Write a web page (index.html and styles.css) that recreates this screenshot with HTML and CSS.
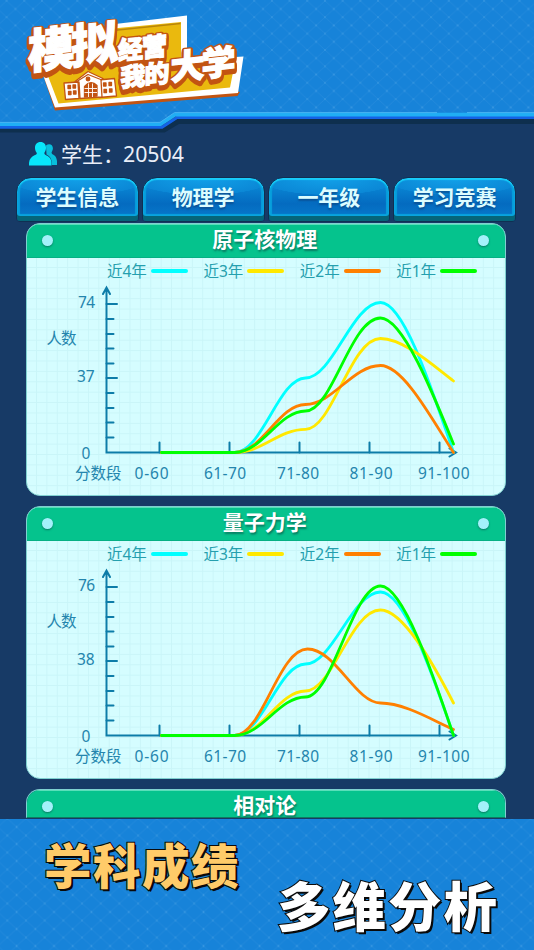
FILE: index.html
```html
<!DOCTYPE html>
<html lang="zh-CN">
<head>
<meta charset="utf-8">
<title>模拟经营我的大学</title>
<link rel="stylesheet" href="styles.css">
</head>
<body>
<div class="page">
  <header class="top">
    <div class="top-pattern"></div>
    <svg class="top-art" width="534" height="136" viewBox="0 0 534 136">
      <path d="M0 130H164L178 121.500H534" fill="none" stroke="#0e2f4e" stroke-width="5"/>
      <path d="M0 127.200H162L177 117.500H534" fill="none" stroke="#1463e6" stroke-width="3"/>
      <path d="M0 124.200H160.500L175 114.600H534" fill="none" stroke="#20aef4" stroke-width="3.800"/>
      <path d="M0 122.400H160L174.500 112.600H437M467 112.600H534" fill="none" stroke="#48b4f2" stroke-width="1"/>
      <path d="M44 78L55 110.500L237.500 96L240 92L190 80Z" fill="#c25412"/>
      <path d="M111 24.500L187 15.500V60L243.500 56.500L238 93L55 107.500L43 75Z" fill="#fff"/>
      <path d="M113 28.500L181 22V58L234 67L230 87.500L58.500 103.500L48 76Z" fill="#eab90e"/>
      <path d="M113 30.500L180.500 23.500" stroke="#b98509" stroke-width="1.500"/>
      <g class="logo-text logo-shadow">
        <text x="0" y="0" font-size="47" textLength="90" transform="translate(28 70.500) skewY(-6.500)">模拟</text>
        <text x="0" y="0" font-size="25" textLength="49" transform="translate(118 61) skewY(-6.500)">经营</text>
        <text x="0" y="0" font-size="25" textLength="49" transform="translate(120.500 88) skewY(-6.500)">我的</text>
        <text x="0" y="0" font-size="34" textLength="65" transform="translate(170.500 81.500) skewY(-6.500)">大学</text>
      </g>
      <g class="logo-text">
        <text x="0" y="0" font-size="47" textLength="90" transform="translate(28 69) skewY(-6.500)">模拟</text>
        <text x="0" y="0" font-size="25" textLength="49" transform="translate(118 60) skewY(-6.500)">经营</text>
        <text x="0" y="0" font-size="25" textLength="49" transform="translate(120.500 87) skewY(-6.500)">我的</text>
        <text x="0" y="0" font-size="34" textLength="65" transform="translate(170.500 80.500) skewY(-6.500)">大学</text>
      </g>
      <g stroke="#c25412" stroke-width="1.300" stroke-linejoin="round">
        <path d="M64 83L78 82L79 98.500L65.500 99.500Z M98 80L114.500 78.500L116.500 96L99 97.500Z" fill="#fff"/>
        <path d="M75 81.500L88 71.500L103 78.500L101 80L102 97L80 98.500L79 82Z" fill="#fff"/>
        <path d="M76 82L88 74.500L102 80" fill="none"/>
        <circle cx="88" cy="79" r="1.800" fill="#c25412"/>
        <path d="M84.500 97V86.500Q91 79.500 97 85.500V96Z" fill="#c25412"/>
        <path d="M88.500 83.500V97M92.500 83.500V97M84.500 88.500H97M84.500 92.500H97" stroke="#fff" stroke-width=".9"/>
        <path d="M68 85.500h2.500v3H68zM73 85h2.500v3H73zM68.500 91.500H71v3h-2.500zM73.500 91H76v3h-2.500zM103.500 83h2.500v3h-2.500zM109 82.500h2.500v3H109zM104 89.500h2.500v3H104zM109.500 89h2.500v3h-2.500z" fill="#c25412"/>
      </g>
    </svg>
  </header>

  <main class="screen">
    <div class="students">
      <svg class="people" width="28" height="24" viewBox="0 0 28 24" fill="#08e6fa">
        <path d="M17 3.500C21 0 26 4 23 9.500C22 11 23 12 24 12.500C27 14 28.500 17 28 23H23C23 17 21 14 17.500 12.500Z" fill="#08bfdc"/>
        <path d="M11.500 0C17 0 18.500 6 15.500 10.500C15 12 16 12.700 17.500 13.500C21 15 23 17.500 22.500 23.500H0C-.5 18 2 14.500 6 13C8 12.300 8 11.500 7.500 10.500C4.500 6 6 0 11.500 0Z"/>
      </svg>
      <span class="students-label">学生：</span><span class="students-count">20504</span>
    </div>

    <nav class="tabs">
      <span class="tab">学生信息</span>
      <span class="tab">物理学</span>
      <span class="tab">一年级</span>
      <span class="tab">学习竞赛</span>
    </nav>

    <section class="cards">
      <article class="card">
        <h2 class="card-title"><i class="pin"></i><span>原子核物理</span><i class="pin"></i></h2>
        <div class="card-body">
          <ul class="legend">
            <li>近4年<i class="key y4"></i></li><li>近3年<i class="key y3"></i></li><li>近2年<i class="key y2"></i></li><li>近1年<i class="key y1"></i></li>
          </ul>
          <svg class="chart" width="478" height="214" viewBox="26.500 282 478 214">
            <g class="axis">
              <path d="M106 288V452.500H455M102.500 294L106 287.500L109.500 294M449 448.500L455.500 452.500L449 456.500"/>
              <path d="M106 304h10.500M106 319h7M106 334h7M106 348.500h7M106 363.500h7M106 378h10.500M106 393h7M106 408h7M106 422.500h7M106 437.500h7M159 442.500v10M229 442.500v10M299 442.500v10M369 442.500v10M439 442.500v10"/>
            </g>
            <g class="labels">
              <text x="77.500" y="307.500" textLength="17">74</text>
              <text x="76.500" y="381.500" textLength="17.500">37</text>
              <text x="81" y="458.500" textLength="9">0</text>
              <text x="46" y="343.500" textLength="30">人数</text>
              <text x="74.500" y="478.800" textLength="46.500">分数段</text>
              <text x="134" y="478.800" textLength="34">0-60</text>
              <text x="203.500" y="478.800" textLength="42">61-70</text>
              <text x="276.500" y="478.800" textLength="42">71-80</text>
              <text x="349" y="478.800" textLength="43">81-90</text>
              <text x="417.500" y="478.800" textLength="51.500">91-100</text>
            </g>
            <g class="series">
              <path class="s4" d="M161 452.500H234C262 452.500 278 378 305 378C332 378 352 302.500 380 302.500C403 302.500 430 385 453 452.500"/>
              <path class="s3" d="M161 452.500H234C262 452.500 278 429.300 305 429.300C332 429.300 350 338.500 380 338.500C403 338.500 432 365 453 381"/>
              <path class="s2" d="M161 452.500H234C262 452.500 278 404.500 305 404.500C332 404.500 352 365.500 380 365.500C403 365.500 432 420 453 452.500"/>
              <path class="s1" d="M161 452.500H234C262 452.500 278 411 305 411C332 411 350 318 380 318C402 318 432 392 453 444"/>
            </g>
          </svg>
        </div>
      </article>

      <article class="card">
        <h2 class="card-title"><i class="pin"></i><span>量子力学</span><i class="pin"></i></h2>
        <div class="card-body">
          <ul class="legend">
            <li>近4年<i class="key y4"></i></li><li>近3年<i class="key y3"></i></li><li>近2年<i class="key y2"></i></li><li>近1年<i class="key y1"></i></li>
          </ul>
          <svg class="chart" width="478" height="214" viewBox="26.500 282 478 214">
            <g class="axis">
              <path d="M106 288V452.500H455M102.500 294L106 287.500L109.500 294M449 448.500L455.500 452.500L449 456.500"/>
              <path d="M106 304h10.500M106 319h7M106 334h7M106 348.500h7M106 363.500h7M106 378h10.500M106 393h7M106 408h7M106 422.500h7M106 437.500h7M159 442.500v10M229 442.500v10M299 442.500v10M369 442.500v10M439 442.500v10"/>
            </g>
            <g class="labels">
              <text x="77.500" y="307.500" textLength="17">76</text>
              <text x="76.500" y="381.500" textLength="17.500">38</text>
              <text x="81" y="458.500" textLength="9">0</text>
              <text x="46" y="343.500" textLength="30">人数</text>
              <text x="74.500" y="478.800" textLength="46.500">分数段</text>
              <text x="134" y="478.800" textLength="34">0-60</text>
              <text x="203.500" y="478.800" textLength="42">61-70</text>
              <text x="276.500" y="478.800" textLength="42">71-80</text>
              <text x="349" y="478.800" textLength="43">81-90</text>
              <text x="417.500" y="478.800" textLength="51.500">91-100</text>
            </g>
            <g class="series">
              <path class="s4" d="M161 452.500H234C262 452.500 278 381 305 381C332 381 352 309 380 309C403 309 430 385 453 452.500"/>
              <path class="s3" d="M161 452.500H234C262 452.500 278 408 305 408C332 408 350 327 380 327C403 327 434 383 453 420"/>
              <path class="s2" d="M161 452.500H234C262 452.500 278 366 307 366C335 366 355 420 380 420C403 420 430 436 453 446.500"/>
              <path class="s1" d="M161 452.500H234C262 452.500 278 414 305 414C332 414 352 303 380 303C403 303 434 396 453 452.500"/>
            </g>
          </svg>
        </div>
      </article>

      <article class="card">
        <h2 class="card-title"><i class="pin"></i><span>相对论</span><i class="pin"></i></h2>
      </article>
    </section>
  </main>

  <footer class="promo">
    <div class="promo-a">学科成绩</div>
    <div class="promo-b">多维分析</div>
  </footer>
</div>
</body>
</html>
```
FILE: styles.css
```css
* { box-sizing: border-box; }

body {
  margin: 0;
  font-family: "Noto Sans", "Noto Sans CJK SC", sans-serif;
  background: #173a66;
}

.page {
  width: 534px;
  height: 950px;
  display: flex;
  flex-direction: column;
  overflow: hidden;
}

.top {
  position: relative;
  height: 136px;
  flex: none;
}

.top-pattern,
.promo {
  background-color: #1783d9;
  background-image:
    radial-gradient(circle at center, #3f9ce3 0, #3f9ce300 1.5px),
    radial-gradient(circle at 0 0, #3f9ce3 0, #3f9ce300 1.5px),
    radial-gradient(circle at 100% 0, #3f9ce3 0, #3f9ce300 1.5px),
    radial-gradient(circle at 0 100%, #3f9ce3 0, #3f9ce300 1.5px),
    radial-gradient(circle at 100% 100%, #3f9ce3 0, #3f9ce300 1.5px),
    linear-gradient(to top right, transparent 47%, #2389db 50%, transparent 53%),
    linear-gradient(to bottom right, transparent 47%, #2389db 50%, transparent 53%);
}

.top-pattern {
  height: 136px;
  background-size: 17.7px 16.4px;
  background-position: 6.6px 0.8px;
  clip-path: polygon(0 0, 100% 0, 100% 115px, 175px 115px, 161px 125px, 0 125px);
}

.top-art {
  position: absolute;
  inset: 0;
}

.logo-text text {
  font-family: "Noto Sans CJK SC", sans-serif;
  font-weight: 900;
  fill: #fff;
  stroke: #fff;
  stroke-width: 1.2px;
  stroke-linejoin: miter;
}

.logo-shadow { filter: drop-shadow(0 2px 0 #c25412); }

.logo-shadow text {
  fill: #c25412;
  stroke: #c25412;
  stroke-width: 6px;
  stroke-linejoin: round;
}

.screen {
  height: 683px;
  flex: none;
  overflow: hidden;
}

.students {
  display: flex;
  height: 41px;
  padding: 6px 0 0 29px;
  color: #e9eef8;
  font-size: 21px;
  line-height: 24px;
}

.students-label {
  margin-left: 4px;
  width: 62px;
  white-space: nowrap;
}

.students-count { font-size: 21.3px; }

.tabs {
  display: flex;
  gap: 3px;
  padding: 0 18px 0 16px;
}

.tab {
  flex: 1;
  height: 45px;
  border: 1px solid #102f52;
  border-radius: 15px 15px 4px 4px;
  background: radial-gradient(ellipse 70px 17px at 50% 0, #12a1e9 0, #0b88d6 98%, #0b88d600 100%), linear-gradient(#0b91dc, #046bc0 60%, #087ccd);
  box-shadow:
    inset 0 -5px 0 #056579,
    inset 0 2px 1px #18ccfa,
    inset 0 -7px 1px #08a4de,
    inset 3px 0 1px #079fdc,
    inset -3px 0 1px #079fdc;
  color: #dcfcff;
  font-size: 21px;
  font-weight: 700;
  font-family: "Noto Sans CJK SC", sans-serif;
  line-height: 37px;
  text-align: center;
  text-shadow: 0 2px 2px #0b4f92;
}

.cards {
  display: grid;
  gap: 10px;
  padding: 1px 28px 0 25.5px;
}

.card {
  height: 273px;
  border: 1px solid #7fd0d0;
  border-radius: 14px;
  overflow: hidden;
  background: #d5fdff;
}

.card:last-child {
  height: 29px;
  border-bottom-color: #0e7b62;
  border-radius: 14px 14px 0 0;
}

.card-title {
  display: flex;
  justify-content: space-between;
  align-items: center;
  margin: 0;
  height: 34px;
  padding: 0 16.5px 0 15.5px;
  background: #05c38d;
  border-bottom: 1px solid #05b084;
  box-shadow: inset 0 1px 0 #58dfb9;
  color: #fff;
  font-family: "Noto Sans CJK SC", sans-serif;
  font-size: 21px;
  font-weight: 700;
  line-height: 23px;
  text-shadow: 1px 2px 2px #087b62;
}

.card-title span { margin: -4px 0 0 -1px; }

.card:last-child .card-title {
  height: 27px;
  padding-top: 5px;
  border-bottom: 0;
}

.pin {
  width: 11px;
  height: 11px;
  border-radius: 50%;
  background: #a3f1fa;
  box-shadow: 0 1px 2px #087b62;
}

.card-body {
  height: 238px;
  background-image:
    linear-gradient(90deg, #c9f5f8 1px, transparent 1px),
    linear-gradient(#c9f5f8 1px, transparent 1px);
  background-size: 10.4px 10.4px;
  background-position: 9px 9px;
}

.legend {
  display: flex;
  list-style: none;
  margin: 0;
  padding: 1px 0 0 80.5px;
  height: 24px;
  color: #259fae;
  font-size: 15.5px;
  line-height: 24px;
}

.legend li {
  display: flex;
  align-items: center;
  width: 96.4px;
  white-space: nowrap;
}

.key {
  width: 37px;
  height: 4px;
  margin-left: 4px;
  border-radius: 2px;
}

.y4 { background: #00ffff; }
.y3 { background: #ffe800; }
.y2 { background: #ff8000; }
.y1 { background: #00ff00; }

.chart { display: block; }

.axis path {
  fill: none;
  stroke: #0d7ca8;
  stroke-width: 2px;
  stroke-linecap: round;
}

.labels text {
  fill: #2485ad;
  font-size: 15.5px;
}

.series path {
  fill: none;
  stroke-width: 2.8px;
  stroke-linecap: round;
}

.series .s4 { stroke: #00ffff; }
.series .s3 { stroke: #ffe800; }
.series .s2 { stroke: #ff8000; }
.series .s1 { stroke: #00ff00; }

.promo {
  height: 131px;
  flex: none;
  background-size: 18.7px 17px;
  background-position: 7.3px -0.5px;
  font-family: "Noto Sans CJK SC", sans-serif;
  font-weight: 900;
  white-space: nowrap;
  -webkit-text-stroke: 2px #0a0a0a;
  paint-order: stroke fill;
  text-shadow: 2px 1.5px 0 #0a0a0a;
}

.promo-a {
  padding: 20px 0 0 44px;
  color: #ffcb69;
  font-size: 47.5px;
  letter-spacing: 1.5px;
  line-height: 50px;
}

.promo-b {
  margin-top: -13px;
  padding-left: 277px;
  color: #fff;
  font-size: 53.5px;
  letter-spacing: 2px;
  line-height: 56px;
}
```
